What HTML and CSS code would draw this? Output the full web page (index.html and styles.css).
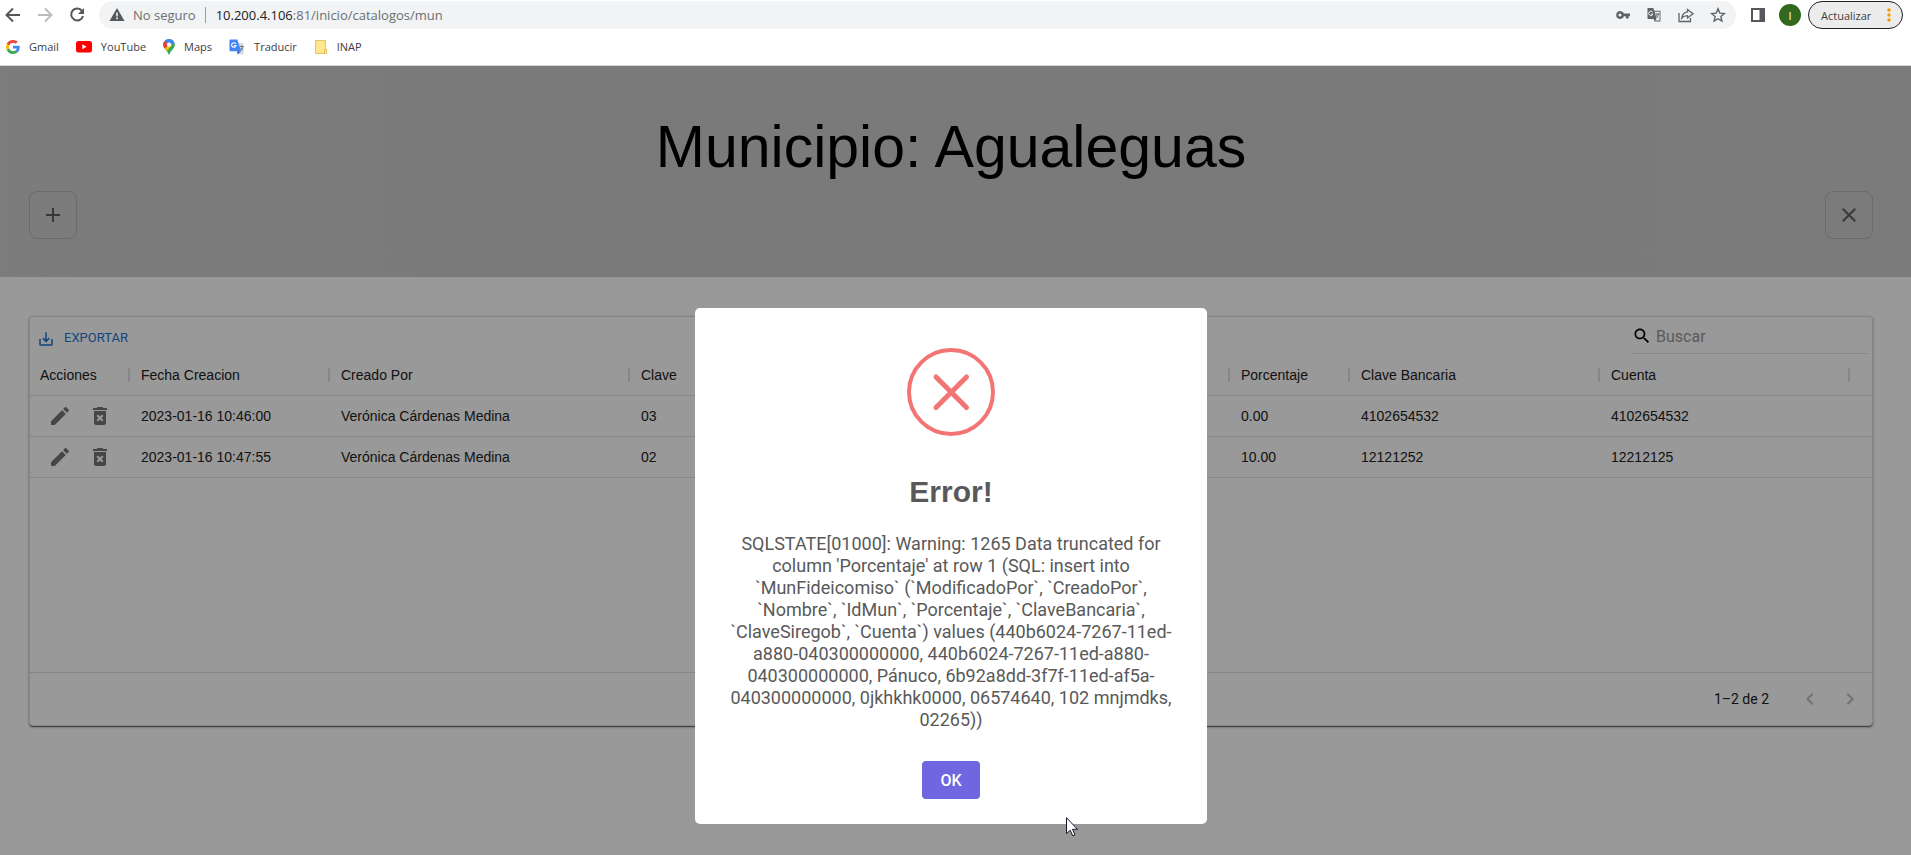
FILE: index.html
```html
<!DOCTYPE html>
<html lang="es">
<head>
<meta charset="utf-8">
<title>Municipios</title>
<link rel="stylesheet" href="styles.css">
</head>
<body>
<header class="chrome">
  <div class="toolbar">
    <div class="nav">
      <button class="tool" aria-label="Atrás"><svg width="20" height="20" viewBox="0 0 20 20"><path d="M17 10H4M10 3.500 3.500 10l6.500 6.500" fill="none" stroke="#54575b" stroke-width="2"/></svg></button>
      <button class="tool" aria-label="Adelante"><svg width="20" height="20" viewBox="0 0 20 20"><path d="M3 10h13M10 3.500 16.500 10 10 16.500" fill="none" stroke="#babcbe" stroke-width="2"/></svg></button>
      <button class="tool" aria-label="Recargar"><svg width="20" height="20" viewBox="0 0 20 20"><path d="M15.300 6.300A6 6 0 1 0 16 11" fill="none" stroke="#54575b" stroke-width="2"/><path d="M17 3v6h-6z" fill="#54575b"/></svg></button>
    </div>
    <div class="omnibox">
      <svg class="warn" width="16" height="14" viewBox="0 0 16 14"><path d="M8 0 15.500 13H.5z" fill="#54575b"/><path d="M7.200 4.500h1.600v4H7.200zM7.200 9.600h1.600v1.600H7.200z" fill="#f1f3f4"/></svg>
      <span class="secure">No seguro</span>
      <span class="url"><b>10.200.4.106</b>:81/inicio/catalogos/mun</span>
      <div class="omni-icons">
        <button class="tool" aria-label="Contraseñas"><svg width="16" height="16" viewBox="0 0 16 16"><path fill-rule="evenodd" d="M5.300 4a4 4 0 0 1 3.700 2.500h6V9.300h-1.400v2.200h-2.800V9.300H9A4 4 0 1 1 5.300 4zM5 6.500a1.500 1.500 0 1 0 0 3 1.500 1.500 0 0 0 0-3z" fill="#5f6368"/></svg></button>
        <button class="tool" aria-label="Traducir página"><svg width="16" height="16" viewBox="0 0 16 16"><path d="M1.500 1h5.800l1 2.700h6.200v10.800H8.500L7.600 12H1.500z" fill="#5f6368"/><path d="M8.700 4.800h4.900v8.600H9.200l1.300-1.500z" fill="#f1f3f4"/><path d="M6.700 5A2.200 2.200 0 1 0 7 7.200H4.900" fill="none" stroke="#f1f3f4"/><path d="M9.400 7h4M11.200 6v1M12.600 7c-.4 1.700-1.400 2.800-2.400 3.500M10.400 8.200c.6 1.100 1.200 1.800 2.200 2.600" fill="none" stroke="#5f6368"/></svg></button>
        <button class="tool" aria-label="Compartir"><svg width="18" height="16" viewBox="0 0 18 16"><path d="M2 6v8.500h11.500V11M10.500 2.500 16 6.800 10.500 11V8.600C8 8.600 6.300 9.200 4.800 11c.5-3.300 2.300-5.600 5.700-6.100z" fill="none" stroke="#5f6368" stroke-width="1.300"/></svg></button>
        <button class="tool" aria-label="Marcador"><svg width="16" height="16" viewBox="0 0 16 16"><path d="m8 1.800 1.800 4.300 4.600.4-3.500 3.100 1 4.500L8 11.700l-3.900 2.400 1-4.500-3.500-3.100 4.600-.4z" fill="none" stroke="#5f6368" stroke-width="1.400"/></svg></button>
      </div>
    </div>
    <button class="tool side" aria-label="Panel lateral"><svg width="14" height="14" viewBox="0 0 14 14"><path fill-rule="evenodd" d="M0 0h14v14H0zM2 2v10h6.500V2z" fill="#54575b"/></svg></button>
    <button class="avatar">I</button>
    <button class="update"><span>Actualizar</span><svg width="4" height="14" viewBox="0 0 4 14"><g fill="#f29900"><circle cx="2" cy="2" r="1.700"/><circle cx="2" cy="7" r="1.700"/><circle cx="2" cy="12" r="1.700"/></g></svg></button>
  </div>
  <nav class="bookmarks">
    <a class="mark" href="#"><svg width="14" height="14" viewBox="0 0 48 48"><path fill="#EA4335" d="M24 9.500c3.540 0 6.710 1.220 9.210 3.600l6.850-6.850C35.900 2.380 30.470 0 24 0 14.620 0 6.510 5.380 2.560 13.220l7.980 6.190C12.430 13.720 17.740 9.500 24 9.500z"/><path fill="#4285F4" d="M46.980 24.550c0-1.570-.15-3.090-.38-4.550H24v9.020h12.940c-.58 2.960-2.260 5.480-4.780 7.180l7.730 6c4.510-4.180 7.090-10.360 7.090-17.650z"/><path fill="#FBBC05" d="M10.530 28.590c-.48-1.450-.76-2.990-.76-4.590s.27-3.140.76-4.590l-7.980-6.190C.92 16.460 0 20.120 0 24s.92 7.540 2.560 10.780z"/><path fill="#34A853" d="M24 48c6.480 0 11.930-2.130 15.890-5.810l-7.730-6c-2.150 1.450-4.920 2.300-8.160 2.300-6.260 0-11.570-4.220-13.470-9.910l-7.980 6.190C6.510 42.620 14.620 48 24 48z"/></svg>Gmail</a>
    <a class="mark" href="#"><svg width="16" height="12" viewBox="0 0 16 12"><rect width="16" height="11.500" rx="2.500" fill="#f00"/><path d="M6.300 3.300v5l4.300-2.500z" fill="#fff"/></svg>YouTube</a>
    <a class="mark" href="#"><svg width="12" height="16" viewBox="0 0 12 16"><path d="M6 0a5.800 5.800 0 0 1 5.800 5.800C11.800 10 7.300 11.500 6.400 15.600q-.4.800-.8 0C5 11.500.2 10 .2 5.800A5.800 5.800 0 0 1 6 0z" fill="#34a853"/><path d="M6 0a5.800 5.800 0 0 1 5.500 3.900L2.400 9.600A6 6 0 0 1 .2 5.800 5.800 5.800 0 0 1 6 0z" fill="#4285f4"/><path d="M1.600 2.100 6 5.800 2.300 10A6 6 0 0 1 .2 5.800a6 6 0 0 1 1.400-3.700z" fill="#ea4335"/><path d="M6 5.800 1.900 9.500 4 12l5.500-6.400z" fill="#fbbc04"/><circle cx="6" cy="5.700" r="2.100" fill="#fff"/></svg>Maps</a>
    <a class="mark" href="#"><svg width="16" height="16" viewBox="0 0 16 16"><path d="M6 4h8.500v11.500H9z" fill="#dadce0"/><path d="M1.500.5h6.800l3.900 11.800H1.500a1 1 0 0 1-1-1V1.500a1 1 0 0 1 1-1z" fill="#4285f4"/><path d="m8.500 15.500 3.700-3.200H8z" fill="#3367d6"/><path d="M6.800 4.900A2.200 2.200 0 1 0 7 6.500H5" fill="none" stroke="#fff" stroke-width="1.200"/><path d="M11 7.500h3.500M12.700 6.500v1M14 7.500c-.3 1.500-1 2.500-1.800 3.200M11.800 9c.5 1 1.300 1.800 2.200 2.300" fill="none" stroke="#5f6f80"/></svg>Traducir</a>
    <a class="mark" href="#"><svg width="14" height="16" viewBox="0 0 14 16"><path d="M1.500 1.500h10v13h-10z" fill="#ffe68f" stroke="#e6c65c"/><path d="M10.500 10.500h2v4h-2z" fill="#ffe68f" stroke="#e6c65c"/></svg>INAP</a>
  </nav>
</header>

<main class="app">
  <section class="banner">
    <h1>Municipio: Agualeguas</h1>
    <div class="banner-actions">
      <button class="square" aria-label="Agregar"><svg width="24" height="24" viewBox="0 0 24 24"><path d="M19 13h-6v6h-2v-6H5v-2h6V5h2v6h6z"/></svg></button>
      <button class="square" aria-label="Cerrar"><svg width="24" height="24" viewBox="0 0 24 24"><path d="M19 6.410 17.590 5 12 10.590 6.410 5 5 6.410 10.590 12 5 17.590 6.410 19 12 13.410 17.590 19 19 17.590 13.410 12z"/></svg></button>
    </div>
  </section>

  <section class="card">
    <div class="card-tools">
      <button class="export"><svg width="18" height="18" viewBox="0 0 24 24"><path d="M19 12v7H5v-7H3v7c0 1.100.9 2 2 2h14c1.100 0 2-.9 2-2v-7zm-6 .67 2.590-2.580L17 11.500l-5 5-5-5 1.410-1.410L11 12.670V3h2z" fill="#1976d2"/></svg>EXPORTAR</button>
      <label class="search"><svg width="20" height="20" viewBox="0 0 24 24"><path d="M15.500 14h-.79l-.28-.27C15.410 12.590 16 11.110 16 9.500 16 5.910 13.090 3 9.500 3S3 5.910 3 9.500 5.910 16 9.500 16c1.610 0 3.090-.59 4.230-1.570l.27.28v.79l5 4.990L20.490 19zm-6 0C7.010 14 5 11.990 5 9.500S7.010 5 9.500 5 14 7.010 14 9.500 11.990 14 9.500 14z"/></svg><input type="text" placeholder="Buscar" aria-label="Buscar"></label>
    </div>
    <div class="grid">
      <table>
        <colgroup><col class="w100"><col class="w200"><col class="w300"><col><col class="w120"><col class="w250"><col class="w250"><col class="w22"></colgroup>
        <thead><tr><th>Acciones</th><th>Fecha Creacion</th><th>Creado Por</th><th>Clave</th><th>Porcentaje</th><th>Clave Bancaria</th><th>Cuenta</th><th class="end"></th></tr></thead>
        <tbody>
          <tr><td><div class="actions"><button aria-label="Editar"><svg width="24" height="24" viewBox="0 0 24 24"><path d="M3 17.250V21h3.750L17.810 9.940l-3.750-3.750zM20.710 7.040c.39-.39.39-1.020 0-1.410l-2.340-2.340a.9959.9959 0 0 0-1.410 0l-1.830 1.830 3.750 3.750z"/></svg></button><button aria-label="Eliminar"><svg width="24" height="24" viewBox="0 0 24 24"><path d="M6 19c0 1.100.9 2 2 2h8c1.100 0 2-.9 2-2V7H6zm2.460-7.120 1.410-1.410L12 12.590l2.120-2.120 1.410 1.410L13.410 14l2.120 2.120-1.410 1.410L12 15.410l-2.120 2.120-1.410-1.410L10.590 14zM15.500 4l-1-1h-5l-1 1H5v2h14V4z"/></svg></button></div></td><td>2023-01-16 10:46:00</td><td>Verónica Cárdenas Medina</td><td>03</td><td>0.00</td><td>4102654532</td><td>4102654532</td><td></td></tr>
          <tr><td><div class="actions"><button aria-label="Editar"><svg width="24" height="24" viewBox="0 0 24 24"><path d="M3 17.250V21h3.750L17.810 9.940l-3.750-3.750zM20.710 7.040c.39-.39.39-1.020 0-1.410l-2.340-2.340a.9959.9959 0 0 0-1.410 0l-1.830 1.830 3.750 3.750z"/></svg></button><button aria-label="Eliminar"><svg width="24" height="24" viewBox="0 0 24 24"><path d="M6 19c0 1.100.9 2 2 2h8c1.100 0 2-.9 2-2V7H6zm2.460-7.120 1.410-1.410L12 12.590l2.120-2.120 1.410 1.410L13.410 14l2.120 2.120-1.410 1.410L12 15.410l-2.120 2.120-1.410-1.410L10.590 14zM15.500 4l-1-1h-5l-1 1H5v2h14V4z"/></svg></button></div></td><td>2023-01-16 10:47:55</td><td>Verónica Cárdenas Medina</td><td>02</td><td>10.00</td><td>12121252</td><td>12212125</td><td></td></tr>
        </tbody>
      </table>
    </div>
    <footer class="pager">
      <span>1–2 de 2</span>
      <button aria-label="Página anterior"><svg width="24" height="24" viewBox="0 0 24 24"><path d="M15.410 7.410 14 6l-6 6 6 6 1.410-1.410L10.830 12z"/></svg></button>
      <button aria-label="Página siguiente"><svg width="24" height="24" viewBox="0 0 24 24"><path d="M10 6 8.590 7.410 13.170 12l-4.580 4.590L10 18l6-6z"/></svg></button>
    </footer>
  </section>

  <div class="backdrop">
    <div class="dialog" role="dialog" aria-labelledby="dlg-title">
      <svg width="88" height="88" viewBox="0 0 88 88"><circle cx="44" cy="44" r="42" fill="none" stroke="#f27474" stroke-width="4"/><path d="m29 29 30.500 30.500M59.500 29 29 59.500" stroke="#f27474" stroke-width="5" stroke-linecap="round"/></svg>
      <h2 id="dlg-title">Error!</h2>
      <p>SQLSTATE[01000]: Warning: 1265 Data truncated for column 'Porcentaje' at row 1 (SQL: insert into `MunFideicomiso` (`ModificadoPor`, `CreadoPor`, `Nombre`, `IdMun`, `Porcentaje`, `ClaveBancaria`, `ClaveSiregob`, `Cuenta`) values (440b6024-7267-11ed-a880-040300000000, 440b6024-7267-11ed-a880-040300000000, Pánuco, 6b92a8dd-3f7f-11ed-af5a-040300000000, 0jkhkhk0000, 06574640, 102 mnjmdks, 02265))</p>
      <button class="ok">OK</button>
    </div>
  </div>
</main>
<svg class="pointer" width="13" height="20" viewBox="0 0 13 20"><path d="M.5.700v16l3.700-3.500 2.500 5.600 2.300-1-2.500-5.500h5z" fill="#fff" stroke="#15152a"/></svg>
</body>
</html>
```
FILE: styles.css
```css
* { box-sizing: border-box; }
body {
  margin: 0;
  min-height: 100vh;
  display: flex;
  flex-direction: column;
  position: relative;
  font-family: "Liberation Sans", Arial, sans-serif;
  font-size: 14px;
  background: #fff;
  overflow: hidden;
}
button { border: 0; padding: 0; background: none; font: inherit; color: inherit; }
svg { display: block; flex: none; }

/* browser frame */
.chrome {
  font-family: "Open Sans", sans-serif;
  border-bottom: 1px solid #d5d7d9;
  background: #fff;
}
.toolbar { display: flex; align-items: center; height: 30px; padding-right: 8px; }
.nav { display: flex; gap: 12px; padding: 0 12px 0 3px; }
.omnibox {
  flex: 1;
  display: flex;
  align-items: center;
  height: 28px;
  padding: 0 10px;
  border-radius: 14px;
  background: #f1f3f4;
  color: #6b6f73;
  font-size: 13px;
}
.secure { padding: 0 9px 0 8px; border-right: 1px solid #9a9da1; line-height: 16px; }
.url { flex: 1; padding-left: 10px; }
.url b { font-weight: 400; color: #202124; }
.omni-icons { display: flex; gap: 15px; }
.side { margin-left: 15px; }
.avatar {
  width: 22px;
  height: 22px;
  margin: 0 7px 0 14px;
  border-radius: 50%;
  background: #33691e;
  color: #fff;
  font-size: 11px;
}
.update {
  display: flex;
  align-items: center;
  justify-content: space-between;
  width: 95px;
  height: 28px;
  padding: 0 11px 0 12px;
  border: 1px solid #202124;
  border-radius: 14px;
  background: #ececec;
  color: #3c4043;
  font-size: 11px;
}
.bookmarks { display: flex; align-items: center; height: 35px; padding: 0 6px 2px; gap: 17px; }
.mark { display: flex; align-items: center; gap: 9px; color: #3c4043; font-size: 11px; text-decoration: none; }

/* page */
.app { flex: 1; position: relative; }
.banner { height: 211px; padding: 41px 38px 0 29px; background: linear-gradient(to right, #cfcfcf, #cbcbcb 30%, #cbcbcb 60%, #cdcdcd); }
.banner h1 { margin: 0 0 3px; font-size: 59px; font-weight: 400; line-height: 81px; text-align: center; }
.banner-actions { display: flex; justify-content: space-between; }
.square {
  display: flex;
  align-items: center;
  justify-content: center;
  width: 48px;
  height: 48px;
  border: 1px solid #b2b2b2;
  border-radius: 8px;
  fill: #5e5e5e;
}
.card {
  margin: 39px 38px 0 29px;
  border: 1px solid #e0e0e0;
  border-radius: 4px;
  background: #fff;
  box-shadow: 0 2px 1px -1px rgba(0, 0, 0, .35), 0 1px 1px rgba(0, 0, 0, .2), 0 1px 3px rgba(0, 0, 0, .3);
  color: #212121;
}
.card-tools { display: flex; justify-content: space-between; height: 37px; padding: 0 4px 0 7px; }
.export {
  display: flex;
  align-items: center;
  gap: 9px;
  height: 40px;
  font-family: Roboto, sans-serif;
  font-size: 13px;
  color: #1976d2;
}
.export svg { margin-top: 4px; }
.search { display: flex; align-items: center; width: 236px; height: 37px; padding-top: 2px; border-bottom: 1px solid #e0e0e0; }
.search input {
  flex: 1;
  min-width: 0;
  padding: 0 4px;
  border: 0;
  outline: 0;
  background: none;
  font-family: Roboto, sans-serif;
  font-size: 16px;
}
.search input::placeholder { color: #979797; opacity: 1; }
.grid { min-height: 318px; }
table { width: 100%; table-layout: fixed; border-collapse: separate; border-spacing: 0; }
.w100 { width: 100px; }
.w120 { width: 120px; }
.w200 { width: 200px; }
.w250 { width: 250px; }
.w300 { width: 300px; }
.w22 { width: 22px; }
th, td { height: 41px; padding: 0 0 0 11px; border-bottom: 1px solid #e0e0e0; font-weight: 400; text-align: left; white-space: nowrap; }
th { height: 42px; background: linear-gradient(#e0e0e0, #e0e0e0) no-repeat right 0 center / 2px 14px; }
th.end { background: none; }
th:first-child { padding-left: 10px; }
.actions { display: flex; gap: 16px; padding-left: 7px; fill: #757575; }
.pager {
  display: flex;
  align-items: center;
  justify-content: flex-end;
  gap: 16px;
  height: 53px;
  padding-right: 10px;
  border-top: 1px solid #e0e0e0;
  font-family: Roboto, sans-serif;
}
.pager span { padding-right: 13px; }
.pager button { fill: #bdbdbd; }

/* alert */
.backdrop {
  position: absolute;
  inset: 0;
  display: flex;
  justify-content: center;
  align-items: flex-start;
  padding: 242px 9px 0 0;
  background: rgba(0, 0, 0, .4);
}
.dialog {
  display: flex;
  flex-direction: column;
  align-items: center;
  width: 512px;
  padding: 40px 28px 25px;
  border-radius: 5px;
  background: #fff;
  text-align: center;
}
.dialog h2 { margin: 38px 0 23px; font-size: 30px; line-height: 36px; color: #595959; }
.dialog p { margin: 0 0 30px; font-family: Roboto, sans-serif; font-size: 18px; line-height: 22px; color: #595959; }
.ok {
  width: 58px;
  height: 38px;
  border-radius: 4px;
  background: #7066e0;
  color: #fff;
  font-family: Roboto, sans-serif;
  font-size: 16px;
  font-weight: 500;
}
.pointer { position: absolute; left: 1066px; top: 817px; }
```
